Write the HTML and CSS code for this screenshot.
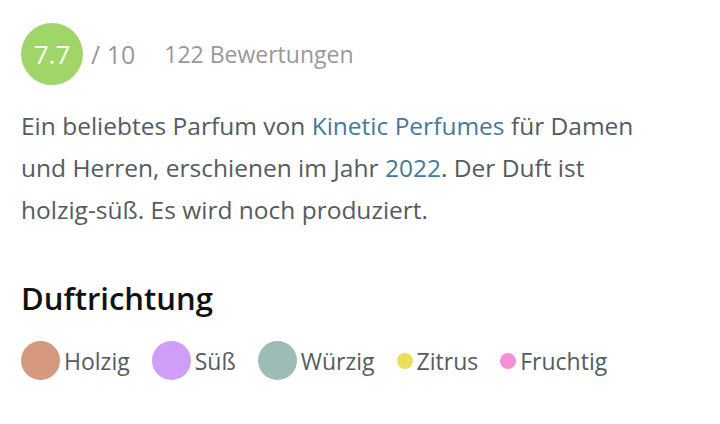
FILE: index.html
```html
<!DOCTYPE html>
<html lang="de">
<head>
    <meta charset="UTF-8">
    <meta name="viewport" content="width=device-width, initial-scale=1.0">
    <title>Kinetic Perfumes</title>
    <link rel="stylesheet" href="styles.css">
</head>
<body>
    <div class="rating">
        <span class="score">7.7</span>
        <span class="scale">/ 10</span>
        <span class="votes">122 Bewertungen</span>
    </div>

    <p class="intro">
        Ein beliebtes Parfum von <a href="#">Kinetic Perfumes</a> für Damen
        und Herren, erschienen im Jahr <a href="#">2022</a>. Der Duft ist
        holzig-süß. Es wird noch produziert.
    </p>

    <h2>Duftrichtung</h2>
    <ul class="accords">
        <li><span class="dot big" style="background:#d6977f"></span>Holzig</li>
        <li><span class="dot big" style="background:#cf9ef8"></span>Süß</li>
        <li><span class="dot big" style="background:#9dbcb6"></span>Würzig</li>
        <li><span class="dot small" style="background:#e8df5c"></span>Zitrus</li>
        <li><span class="dot small" style="background:#f38fd3"></span>Fruchtig</li>
    </ul>
</body>
</html>
```

FILE: styles.css
```css
body {
    margin: 0;
    padding: 23px 21px;
    font-family: "Open Sans", sans-serif;
    color: #555b60;
    background: #fff;
}

.rating {
    display: flex;
    align-items: center;
    font-size: 23px;
    color: #999;
}

.score {
    width: 62px;
    height: 62px;
    border-radius: 50%;
    background-color: #9fd569;
    color: #fff;
    font-size: 26px;
    display: flex;
    justify-content: center;
    align-items: center;
}

.scale {
    margin-left: 8px;
    font-size: 25px;
}

.votes {
    margin-left: 29px;
}

.intro {
    max-width: 625px;
    font-size: 24.5px;
    line-height: 42px;
    margin: 20px 0 0 0;
}

.intro a {
    color: #457a9a;
    text-decoration: none;
}

h2 {
    font-size: 31px;
    font-weight: 600;
    color: #111;
    margin: 46px 0 22px 0;
}

.accords {
    list-style: none;
    margin: 0;
    padding: 0;
    display: flex;
    align-items: center;
    font-size: 23px;
}

.accords li {
    display: flex;
    align-items: center;
    margin-right: 22px;
}

.dot {
    border-radius: 50%;
    margin-right: 4px;
}

.dot.big {
    width: 39px;
    height: 39px;
}

.dot.small {
    width: 16px;
    height: 16px;
}
```
